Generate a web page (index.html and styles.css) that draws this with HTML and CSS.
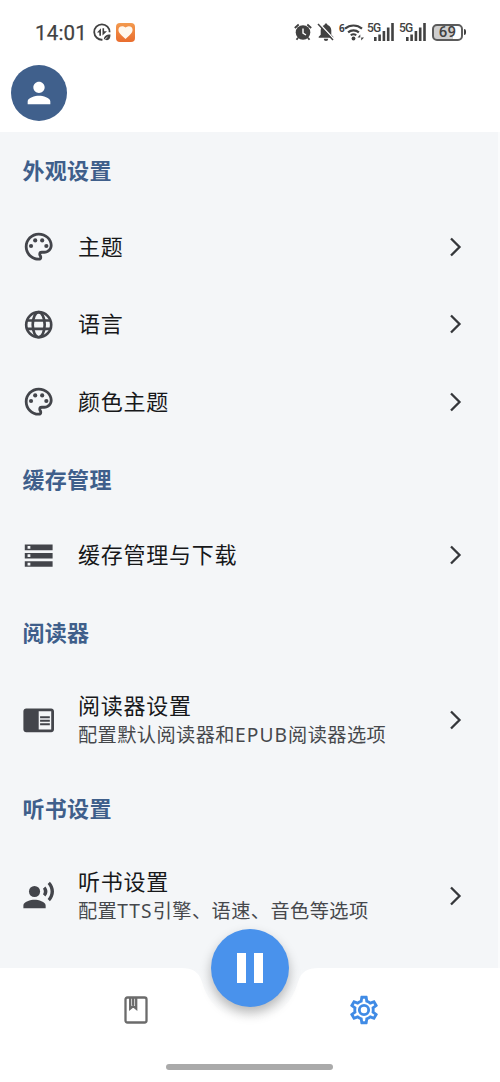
FILE: index.html
```html
<!DOCTYPE html>
<html lang="zh-CN">
<head>
<meta charset="utf-8">
<title>设置</title>
<link rel="stylesheet" href="styles.css">
</head>
<body>
<svg class="defs" width="0" height="0">
  <symbol id="palette" viewBox="0 0 24 24"><path d="M12 22C6.490 22 2 17.510 2 12S6.490 2 12 2s10 4.040 10 9c0 3.310-2.690 6-6 6h-1.770c-.28 0-.5.22-.5.5 0 .12.05.23.13.33.41.47.64 1.060.64 1.670A2.500 2.500 0 0 1 12 22zm0-18c-4.410 0-8 3.590-8 8s3.590 8 8 8c.28 0 .5-.22.5-.5a.54.54 0 0 0-.14-.35c-.41-.46-.63-1.050-.63-1.650a2.500 2.500 0 0 1 2.500-2.500H16c2.210 0 4-1.790 4-4 0-3.860-3.590-7-8-7z"/><circle cx="6.500" cy="11.500" r="1.500"/><circle cx="9.500" cy="7.500" r="1.500"/><circle cx="14.500" cy="7.500" r="1.500"/><circle cx="17.500" cy="11.500" r="1.500"/></symbol>
  <symbol id="chevron" viewBox="0 0 14 20"><path d="M2 1.500 10.500 10 2 18.500" fill="none" stroke="#35373b" stroke-width="2.300"/></symbol>
  <symbol id="signal" viewBox="0 0 20 18"><path d="M0 14h2.600v4H0zM4.300 11.500h2.600V18H4.300zM8.600 8h2.600v10H8.600zM12.900 4.500h2.600V18h-2.600zM17.200 0h2.600v18h-2.600z"/></symbol>
</svg>
<div class="screen">
  <header class="status">
    <span class="clock">14:01</span>
    <svg class="charge" viewBox="0 0 18 18"><path d="M16.600 9.300A7.700 7.700 0 1 0 9.500 16.700" fill="none" stroke="#414141" stroke-width="1.800"/><path d="M4 9.500 8 5.200v7.500H6.300V9.500zM9.500 5.200h1.600v3.100H14L9.500 12.500zM11 17c-.6-3.500 2-5.500 6.500-5.500 0 4.500-2 6.500-5.200 5.300z"/><path d="m10.500 17.500 4-3.500" stroke="#fff" stroke-width=".8"/></svg>
    <span class="heart"><svg viewBox="0 0 24 24"><path d="m12 21-1.500-1.300C5.400 15.400 2 12.300 2 8.500A5.500 5.500 0 0 1 7.500 3c1.700 0 3.400.8 4.500 2.100A6 6 0 0 1 16.500 3 5.500 5.500 0 0 1 22 8.500c0 3.800-3.400 6.900-8.500 11.200z"/></svg></span>
    <div class="indicators">
      <svg class="alarm" viewBox="0 0 18 18"><circle cx="9" cy="9.500" r="7.300"/><path d="M.8 5 4.700 1.500M17.200 5l-3.900-3.500M4 14.800l-1.500 2M14 14.800l1.500 2" stroke="#414141" stroke-width="1.800"/><path d="M9 5.500v4.700l3 1.800" fill="none" stroke="#fff" stroke-width="1.400"/></svg>
      <svg class="bell" viewBox="0 0 18 18"><path d="M9 .5c.9 0 1.500.6 1.500 1.500 2.300.7 3.800 2.600 3.800 5.200v4.500l2 2v1H1.700v-1l2-2V7.200C3.700 4.600 5.200 2.700 7.500 2 7.500 1.100 8.100.5 9 .5zM6.800 15.700h4.400a2.200 2.200 0 0 1-4.400 0z"/><path d="m2.300.5 15 16" stroke="#fff" stroke-width="1.500"/><path d="m1 1 15 16" stroke="#414141" stroke-width="1.500"/></svg>
      <div class="wifi"><span class="gen">6</span><svg viewBox="0 0 20 18"><path d="M1 5.600a13.200 13.200 0 0 1 17 0M4.100 9.400a8.400 8.400 0 0 1 10.800 0" fill="none" stroke="#414141" stroke-width="2.200"/><path d="M6.700 12.300a4.600 4.600 0 0 1 5.600 0" fill="none" stroke="#414141" stroke-width="1.800"/><circle cx="9.500" cy="15.500" r="1.900"/><path d="m16.300 11.500-2.800 3.100h2.800v3zM17.200 11.500v6l2.800-3.100h-2.800z"/></svg></div>
      <div class="cell"><span class="net">5G</span><svg viewBox="0 0 20 18"><use href="#signal"/></svg></div>
      <div class="cell"><span class="net">5G</span><svg viewBox="0 0 20 18"><use href="#signal"/></svg></div>
      <div class="battery"><span class="level">69</span></div><i class="nub"></i>
    </div>
  </header>
  <div class="profile">
    <div class="avatar"><svg viewBox="0 0 24 24"><path d="M12 12c2.210 0 4-1.790 4-4s-1.790-4-4-4-4 1.790-4 4 1.790 4 4 4zm0 2c-2.670 0-8 1.340-8 4v2h16v-2c0-2.660-5.330-4-8-4z"/></svg></div>
  </div>
  <main class="settings">
    <h2 class="title">外观设置</h2>
    <div class="row"><svg class="icon"><use href="#palette"/></svg><div class="label">主题</div><svg class="go"><use href="#chevron"/></svg></div>
    <div class="row"><svg class="icon" viewBox="0 0 24 24"><g fill="none" stroke="#43454b" stroke-width="1.900"><circle cx="12" cy="12" r="9"/><ellipse cx="12" cy="12" rx="4.300" ry="9"/><path d="M3.500 9h17M3.500 15h17"/></g></svg><div class="label">语言</div><svg class="go"><use href="#chevron"/></svg></div>
    <div class="row"><svg class="icon"><use href="#palette"/></svg><div class="label">颜色主题</div><svg class="go"><use href="#chevron"/></svg></div>
    <h2 class="title">缓存管理</h2>
    <div class="row"><svg class="icon" viewBox="0 0 24 24"><path d="M2 20h20v-4H2v4zm2-3h2v2H4v-2zM2 4v4h20V4H2zm4 3H4V5h2v2zm-4 7h20v-4H2v4zm2-3h2v2H4v-2z"/></svg><div class="label">缓存管理与下载</div><svg class="go"><use href="#chevron"/></svg></div>
    <h2 class="title">阅读器</h2>
    <div class="row tall"><svg class="icon" viewBox="0 0 24 24"><path d="M13 12h7v1.500h-7zm0-2.500h7V11h-7zm0 5h7V16h-7zM21 4H3c-1.100 0-2 .9-2 2v13c0 1.100.9 2 2 2h18c1.100 0 2-.9 2-2V6c0-1.100-.9-2-2-2zm0 15h-9V6h9v13z"/></svg><div class="text"><div class="label">阅读器设置</div><div class="note">配置默认阅读器和<span class="latin">EPUB</span>阅读器选项</div></div><svg class="go"><use href="#chevron"/></svg></div>
    <h2 class="title">听书设置</h2>
    <div class="row tall"><svg class="icon" viewBox="0 0 24 24"><circle cx="9" cy="9" r="4"/><path d="M9 15c-2.670 0-8 1.340-8 4v2h16v-2c0-2.660-5.330-4-8-4zM16.760 5.360l-1.680 1.690c.84 1.180.84 2.710 0 3.890l1.680 1.690c2.020-2.020 2.020-5.070 0-7.270zM20.070 2l-1.630 1.630c2.770 3.020 2.770 7.560 0 10.740L20.070 16c3.900-3.890 3.910-9.950 0-14z"/></svg><div class="text"><div class="label">听书设置</div><div class="note">配置<span class="latin">TTS</span>引擎、语速、音色等选项</div></div><svg class="go"><use href="#chevron"/></svg></div>
  </main>
  <nav class="tabs">
    <svg class="bar" viewBox="0 0 500 114"><path d="M0 0H181C193 0 199 4 202 14C209 39 227 52 250 52S291 39 298 14C301 4 307 0 319 0H500V114H0Z"/></svg>
    <button class="play" aria-label="暂停"><i></i><i></i></button>
    <div class="tab"><svg viewBox="0 0 24 28"><path d="M3.500 1.500h17q2 0 2 2v21q0 2-2 2h-17q-2 0-2-2v-21q0-2 2-2zM6.200 1.500v11l3-2.400 3 2.400v-11M9.200 2v7" fill="none" stroke="#6b6b6b" stroke-width="2.300"/></svg></div>
    <div class="tab"><svg class="gear" viewBox="0 0 24 24"><path d="M19.430 12.980c.04-.32.07-.64.07-.98s-.03-.66-.07-.98l2.110-1.650c.19-.15.24-.42.12-.64l-2-3.460a.5.5 0 0 0-.61-.22l-2.490 1c-.52-.4-1.080-.73-1.690-.98l-.38-2.650A.49.49 0 0 0 14 2h-4a.49.49 0 0 0-.49.42l-.38 2.650c-.61.25-1.170.59-1.690.98l-2.490-1a.5.5 0 0 0-.61.22l-2 3.460a.49.49 0 0 0 .12.64l2.110 1.650c-.04.32-.07.65-.07.98s.03.66.07.98l-2.110 1.650a.49.49 0 0 0-.12.640l2 3.460c.12.22.38.3.61.22l2.490-1c.52.4 1.080.73 1.690.98l.38 2.650c.03.24.24.42.49.42h4c.25 0 .46-.18.49-.42l.38-2.650c.61-.25 1.170-.59 1.690-.98l2.490 1c.23.08.49 0 .61-.22l2-3.460a.49.49 0 0 0-.12-.64zm-1.980-1.710c.04.31.05.52.05.73s-.02.43-.05.73l-.14 1.130.89.700 1.080.84-.7 1.210-1.270-.51-1.040-.42-.9.680c-.43.32-.84.56-1.250.73l-1.060.43-.16 1.130-.2 1.350h-1.400l-.35-2.480-1.060-.43c-.43-.18-.83-.41-1.230-.71l-.91-.7-1.060.43-1.270.51-.7-1.210 1.080-.84.89-.7-.14-1.130A7 7 0 0 1 6.500 12c0-.21.02-.43.05-.73l.14-1.130-.89-.7-1.080-.84.7-1.210 1.270.51 1.040.42.9-.68c.43-.32.84-.56 1.250-.73l1.060-.43.16-1.130.2-1.350h1.390l.35 2.480 1.060.43c.43.18.83.41 1.230.71l.91.7 1.060-.43 1.270-.51.7 1.210-1.070.85-.89.7z"/><circle cx="12" cy="12" r="3.300" fill="none" stroke="#408be5" stroke-width="2"/></svg></div>
    <div class="home"></div>
  </nav>
</div>
</body>
</html>
```
FILE: styles.css
```css
* { box-sizing: border-box; }
body { margin: 0; font-family: "Noto Sans", "Noto Sans CJK SC", sans-serif; background: #fff; }
.defs { position: absolute; }
.screen { width: 500px; height: 1082px; display: flex; flex-direction: column; overflow: hidden; }
.status { height: 64px; padding: 0 34px 0 35px; display: flex; align-items: center; fill: #414141; color: #414141; }
.clock { font: 400 20.500px/1 Roboto, sans-serif; -webkit-text-stroke: .25px #414141; letter-spacing: .2px; width: 58px; padding-top: 2px; white-space: nowrap; }
.charge { width: 18px; height: 18px; }
.heart { width: 19px; height: 19px; margin-left: 5px; border-radius: 4px; background: linear-gradient(#f39a4e, #e96d2e); display: grid; place-items: center; }
.heart svg { width: 17px; height: 17px; fill: #fff8ee; }
.indicators { margin-left: auto; display: flex; align-items: center; }
.alarm { width: 18px; height: 18px; margin-right: 5px; }
.bell { width: 18px; height: 18px; margin-right: 4px; }
.wifi { display: flex; width: 28px; }
.gen { font: 700 10px/10px "Open Sans", sans-serif; width: 5px; }
.wifi svg { width: 20px; height: 18px; }
.cell { width: 32px; height: 18px; display: flex; }
.net { font: 500 12px/10px Roboto, sans-serif; letter-spacing: -.8px; width: 7px; white-space: nowrap; }
.cell svg { width: 20px; height: 18px; }
.battery { width: 31px; height: 17px; margin-left: 1px; border: 2px solid #5b5b5b; border-radius: 5px; background: linear-gradient(90deg, #cfcfcf 69%, #fff 69%); display: grid; place-items: center; }
.level { font: 500 15px/13px Roboto, sans-serif; letter-spacing: .3px; }
.nub { width: 2px; height: 6px; margin-left: 1px; border-radius: 0 2px 2px 0; background: #414141; }
.profile { height: 68px; padding: 1px 0 0 11px; }
.avatar { width: 56px; height: 56px; border-radius: 50%; background: #40608c; display: grid; place-items: center; }
.avatar svg { width: 34px; height: 34px; fill: #fff; }
.settings { height: 836px; flex: none; background: #f4f6f8; border-right: 2px solid #fafbfc; }
.title { margin: 0; height: 76px; padding: 1px 0 0 22.500px; font-size: 22px; line-height: 74px; font-weight: 700; letter-spacing: .3px; color: #3f5f8b; }
.row { height: 77.500px; padding: 0 35px 0 22px; display: flex; align-items: center; }
.row.tall { height: 99.700px; }
.icon { width: 33.400px; height: 33.400px; flex: none; margin-right: 22.500px; fill: #43454b; }
.label { font-size: 22px; line-height: 32px; padding-bottom: 2px; letter-spacing: .75px; color: #17181a; }
.tall .label { padding: 0; line-height: 31px; }
.text { padding-bottom: 1px; }
.note { font-size: 19.200px; line-height: 28px; letter-spacing: .44px; color: #46484c; white-space: nowrap; }
.latin { letter-spacing: 1.100px; }
.go { width: 14px; height: 20px; margin-left: auto; flex: none; }
.tabs { position: relative; height: 114px; flex: none; display: grid; grid-template-columns: 1fr 1fr; padding: 0 22px; background: linear-gradient(#f4f6f8, #fff 52px); }
.bar { position: absolute; left: 0; top: 0; width: 500px; height: 114px; fill: #fff; }
.play { position: absolute; left: 211px; top: -39px; width: 78px; height: 78px; border: 0; border-radius: 50%; background: #4992ec; box-shadow: 0 6px 12px rgba(0,0,0,.28); display: flex; justify-content: center; align-items: center; gap: 8px; padding: 0; }
.play i { width: 9px; height: 30px; background: #fff; }
.tab { position: relative; height: 84px; display: grid; place-items: center; }
.tab svg { width: 24px; height: 28px; }
.tab .gear { width: 34px; height: 34px; fill: #408be5; }
.home { position: absolute; left: 166px; top: 96px; width: 167px; height: 6px; border-radius: 3px; background: #aaa; }
```
